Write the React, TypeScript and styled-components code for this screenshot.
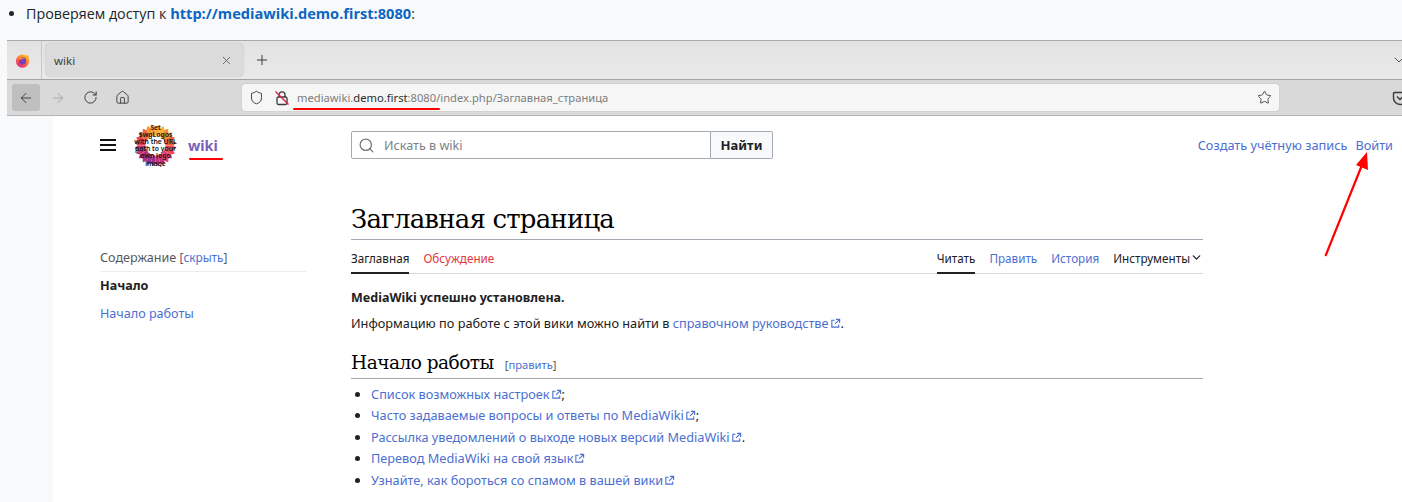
import styled, { createGlobalStyle } from 'styled-components';
import { ArrowLeft, ArrowRight, ChevronDown, House, Plus, RotateCw, Search, Shield, Star, X } from 'lucide-react';

const GlobalStyle = createGlobalStyle`
  html, body {
    margin: 0;
    padding: 0;
    background: #f8f9fa;
    overflow: hidden;
  }
  a {
    color: #4b6fd0;
    text-decoration: none;
  }
`;

const Page = styled.div`
  position: relative;
  width: 1402px;
  height: 502px;
  overflow: hidden;
  font-family: "Noto Sans", "Open Sans", sans-serif;
  color: #202122;
`;

const Intro = styled.ul`
  margin: 0;
  height: 40px;
  padding: 3px 0 0 26px;
  box-sizing: border-box;
  font-family: "Open Sans", "Noto Sans", sans-serif;
  font-size: 14.3px;
  line-height: 20px;
  color: #212529;
  a {
    color: #0b66c3;
    font-weight: 700;
    font-size: 14.6px;
  }
`;

const Browser = styled.div`
  margin-left: 7px;
  font-family: "Noto Sans", sans-serif;
`;

const TabStrip = styled.div`
  height: 38px;
  border-top: 1px solid #a9a9a9;
  border-bottom: 1px solid #a3a3a3;
  background: linear-gradient(#e2e2e2, #e9e9e9);
  display: flex;
  align-items: center;
`;

const PinnedTab = styled.div`
  width: 35px;
  height: 100%;
  border-right: 1px solid #c8c8c8;
  display: flex;
  align-items: center;
  justify-content: center;
  padding-right: 4px;
  box-sizing: border-box;
`;

const ActiveTab = styled.div`
  margin-left: 4px;
  width: 197px;
  height: 32px;
  border-radius: 4px;
  background: #dbdbdb;
  box-shadow: 0 0 2px #b0b0b0;
  display: flex;
  align-items: center;
  justify-content: space-between;
  padding: 0 10px 0 8px;
  box-sizing: border-box;
  font-size: 11.5px;
  color: #3c3c3c;
`;

const NewTab = styled.div`
  margin-left: 11px;
  display: flex;
  color: #3a3a3a;
`;

const TabMenu = styled.div`
  margin-left: auto;
  margin-right: -5px;
  display: flex;
  color: #4a4a4a;
`;

const NavBar = styled.div`
  height: 35px;
  background: #d9d9d9;
  border-bottom: 1px solid #b4b4b4;
  display: flex;
  align-items: center;
  padding-left: 5px;
`;

const NavButton = styled.div<{ $active?: boolean; $muted?: boolean }>`
  width: 28px;
  height: 27px;
  margin-right: 4px;
  border-radius: 3px;
  display: flex;
  align-items: center;
  justify-content: center;
  background: ${(p) => (p.$active ? '#bfbfbf' : 'transparent')};
  color: ${(p) => (p.$muted ? '#a4a4a4' : '#3a3a3a')};
`;

const UrlBar = styled.div`
  position: relative;
  margin-left: 102px;
  width: 1037px;
  height: 27px;
  background: #f6f6f6;
  border-radius: 3px;
  box-shadow: 0 0 1px #9a9a9a;
  display: flex;
  align-items: center;
  padding: 0 7px;
  box-sizing: border-box;
  color: #3a3a3a;
`;

const ShieldSlot = styled.div`
  display: flex;
  margin-right: 10px;
`;

const UrlText = styled.div`
  margin-left: 7px;
  font-size: 11.2px;
  color: #7d7d7d;
  flex: 1;
  b {
    font-weight: 400;
    color: #2b2b2b;
  }
`;

const UrlMark = styled.div`
  position: absolute;
  left: 51px;
  top: 24px;
  width: 147px;
  height: 2px;
  background: #f00;
  border-radius: 1px;
`;

const PocketSlot = styled.div`
  margin-left: auto;
  margin-right: -6px;
  display: flex;
  color: #3a3a3a;
`;

const Content = styled.div`
  margin-left: 53px;
  height: 386px;
  background: #fff;
  padding: 4px 9px 0 47px;
  box-sizing: border-box;
`;

const Header = styled.header`
  height: 50px;
  display: flex;
  align-items: center;
  font-size: 13px;
`;

const Burger = styled.div`
  width: 16px;
  height: 12px;
  border-top: 2px solid #111;
  border-bottom: 2px solid #111;
  box-sizing: border-box;
  position: relative;
  &::after {
    content: '';
    position: absolute;
    left: 0;
    right: 0;
    top: 3px;
    height: 2px;
    background: #111;
  }
`;

const Brand = styled.div`
  position: relative;
  width: 217px;
  margin-left: 18px;
  display: flex;
  align-items: center;
  gap: 11px;
`;

const WikiName = styled.span`
  font-weight: 700;
  font-size: 14.4px;
  color: #7b5fb8;
  padding-top: 1px;
`;

const BrandMark = styled.div`
  position: absolute;
  left: 55px;
  top: 34px;
  width: 34px;
  height: 2px;
  background: #f00;
  border-radius: 1px;
`;

const SearchForm = styled.div`
  width: 422px;
  height: 28px;
  display: flex;
`;

const SearchInput = styled.div`
  flex: 1;
  border: 1px solid #a2a9b1;
  border-radius: 2px 0 0 2px;
  display: flex;
  align-items: center;
  gap: 9px;
  padding-left: 6px;
  color: #7d8185;
  font-size: 12.6px;
`;

const SearchButton = styled.div`
  width: 62px;
  box-sizing: border-box;
  border: 1px solid #a2a9b1;
  border-left: 0;
  border-radius: 0 2px 2px 0;
  background: #f8f9fa;
  display: flex;
  align-items: center;
  justify-content: center;
  font-weight: 700;
  font-size: 13px;
  color: #202122;
`;

const UserLinks = styled.nav`
  margin-left: auto;
  display: flex;
  gap: 8px;
  font-size: 12.75px;
`;

const Columns = styled.div`
  display: grid;
  grid-template-columns: 206px 852px;
  column-gap: 45px;
  padding-top: 31px;
`;

const Sidebar = styled.aside`
  padding-top: 46px;
  font-size: 12.6px;
`;

const TocHead = styled.div`
  height: 24px;
  border-bottom: 1px solid #eaecf0;
  color: #54595d;
  line-height: 20px;
  margin-bottom: 3px;
  span {
    font-size: 11.8px;
  }
`;

const TocItem = styled.div<{ $current?: boolean }>`
  height: 28px;
  line-height: 22px;
  font-weight: ${(p) => (p.$current ? 700 : 400)};
`;

const Title = styled.h1`
  margin: 0;
  height: 38px;
  border-bottom: 1px solid #a2a9b1;
  font-family: "DejaVu Serif", "Liberation Serif", serif;
  font-weight: 400;
  font-size: 26px;
  letter-spacing: -0.8px;
  line-height: 36px;
  color: #000;
`;

const TabRow = styled.div`
  height: 34px;
  border-bottom: 1px solid #d8dadd;
  box-sizing: border-box;
  display: flex;
  justify-content: space-between;
  font-size: 11.7px;
`;

const TabGroup = styled.div`
  display: flex;
  gap: 14px;
`;

const PageTab = styled.div<{ $selected?: boolean; $tone?: string }>`
  height: 34px;
  padding-top: 3px;
  box-sizing: border-box;
  border-bottom: 2px solid ${(p) => (p.$selected ? '#202122' : 'transparent')};
  display: flex;
  align-items: center;
  color: ${(p) => p.$tone ?? '#202122'};
`;

const Article = styled.article`
  font-size: 12.72px;
  line-height: 20px;
  padding-top: 14px;
`;

const Paragraph = styled.p<{ $strong?: boolean }>`
  margin: 0 0 5px;
  font-weight: ${(p) => (p.$strong ? 700 : 400)};
  font-size: ${(p) => (p.$strong ? '12.5px' : 'inherit')};
`;

const SectionHead = styled.h2`
  margin: 16px 0 0;
  height: 30px;
  border-bottom: 1px solid #a2a9b1;
  box-sizing: border-box;
  font-family: "DejaVu Serif", "Liberation Serif", serif;
  font-weight: 400;
  font-size: 18.5px;
  letter-spacing: -0.5px;
  line-height: 28px;
  color: #000;
  span {
    margin-left: 11px;
    font-family: "Noto Sans", sans-serif;
    font-size: 11.2px;
    letter-spacing: 0;
    color: #54595d;
  }
`;

const LinkList = styled.ul`
  margin: 5px 0 0 20px;
  padding: 0;
  li {
    height: 21.4px;
    line-height: 21px;
  }
`;

const OutIcon = styled.svg`
  width: 11px;
  height: 11px;
  margin-left: 1px;
  vertical-align: -1px;
  color: #4b6fd0;
`;

const ArrowLayer = styled.svg`
  position: absolute;
  left: 1310px;
  top: 145px;
  pointer-events: none;
`;

const logoColors = ['#fbb034', '#f78a2e', '#f2603a', '#ee4a4e', '#e83f6f', '#c2307f', '#9c2f8c', '#a92f80', '#c9336a', '#e2455a', '#ee6a3a', '#f6952c'];

const LogoWedges = () => {
  const count = 24;
  return (
    <>
      {Array.from({ length: count }, (_, i) => {
        const step = (Math.PI * 2) / count;
        const a = i * step - Math.PI / 2;
        const pt = (r: number, t: number) => `${21.5 + r * Math.cos(t)},${21.5 + r * Math.sin(t)}`;
        return (
          <polygon
            key={i}
            points={`21.5,21.5 ${pt(18, a)} ${pt(21, a + step / 2)} ${pt(18, a + step)}`}
            fill={logoColors[Math.floor((i / count) * logoColors.length)]}
          />
        );
      })}
    </>
  );
};

const logoLines = ['Set', '$wgLogos', 'with the URL', 'path to your', 'own logo', 'image'];

const Logo = () => (
  <svg width="43" height="43" viewBox="0 0 43 43">
    <LogoWedges />
    <circle cx="21.5" cy="21.5" r="10" fill="#fff" />
    {logoLines.map((line, i) => (
      <text
        key={line}
        x="21.5"
        y={6 + i * 7.1}
        textAnchor="middle"
        fontFamily="Noto Sans, sans-serif"
        fontWeight="600"
        fontSize="6.8"
        fill="#111"
      >
        {line}
      </text>
    ))}
  </svg>
);

const FirefoxLogo = () => (
  <svg width="15" height="15" viewBox="0 0 16 16">
    <defs>
      <linearGradient id="fx" x1="0.8" y1="0" x2="0.2" y2="1">
        <stop offset="0" stopColor="#ffc21c" />
        <stop offset="0.5" stopColor="#ff7139" />
        <stop offset="1" stopColor="#e31587" />
      </linearGradient>
    </defs>
    <circle cx="8" cy="8.6" r="7" fill="url(#fx)" />
    <path d="M12.5 1.5c1.6 1.4 2.4 3 2.5 4.6L12 4z" fill="#ffb21c" />
    <circle cx="8" cy="8.4" r="3.9" fill="#7b3fb5" />
    <path d="M4.2 6.2c1.6-1.6 4.6-1.8 6.2-.2-1.6-.4-2.8 0-3.4.8L4.6 7.4z" fill="#ff8a2c" />
  </svg>
);

const LockOff = () => (
  <svg width="16" height="16" viewBox="0 0 16 16" fill="none" stroke="#3a3a3a" strokeWidth="1.3">
    <rect x="3" y="7" width="10" height="7.5" rx="1.5" />
    <path d="M5 7V4.8a3 3 0 0 1 6 0V7" />
    <path d="M1.5 1.5l13 13" stroke="#e2224a" strokeWidth="1.4" />
  </svg>
);

const PocketIcon = () => (
  <svg width="16" height="16" viewBox="0 0 16 16" fill="none" stroke="#3a3a3a" strokeWidth="1.4">
    <path d="M2.5 2.5h11a1 1 0 0 1 1 1V8a6.5 6.5 0 0 1-13 0V3.5a1 1 0 0 1 1-1z" />
    <path d="M5 6.5l3 3 3-3" />
  </svg>
);

const OutLink = () => (
  <OutIcon viewBox="0 0 12 12" fill="none" stroke="currentColor" strokeWidth="1.2">
    <path d="M5 2.5H2v7.5h7.5V7" />
    <path d="M6.5 1.5h4v4M10.5 1.5L5.5 6.5" />
  </OutIcon>
);

const App = () => (
  <Page>
    <GlobalStyle />
    <Intro>
      <li>
        Проверяем доступ к <a href="#u">http://mediawiki.demo.first:8080</a>:
      </li>
    </Intro>

    <Browser>
      <TabStrip>
        <PinnedTab>
          <FirefoxLogo />
        </PinnedTab>
        <ActiveTab>
          wiki
          <X size={13} strokeWidth={1.5} color="#555" />
        </ActiveTab>
        <NewTab>
          <Plus size={16} strokeWidth={1.5} />
        </NewTab>
        <TabMenu>
          <ChevronDown size={16} strokeWidth={1.4} />
        </TabMenu>
      </TabStrip>
      <NavBar>
        <NavButton $active>
          <ArrowLeft size={16} strokeWidth={1.4} />
        </NavButton>
        <NavButton $muted>
          <ArrowRight size={16} strokeWidth={1.4} />
        </NavButton>
        <NavButton>
          <RotateCw size={15} strokeWidth={1.6} />
        </NavButton>
        <NavButton>
          <House size={15} strokeWidth={1.5} />
        </NavButton>
        <UrlBar>
          <ShieldSlot>
            <Shield size={15} strokeWidth={1.5} />
          </ShieldSlot>
          <LockOff />
          <UrlText>
            mediawiki.<b>demo.first</b>:8080/index.php/Заглавная_страница
          </UrlText>
          <Star size={15} strokeWidth={1.4} />
          <UrlMark />
        </UrlBar>
        <PocketSlot>
          <PocketIcon />
        </PocketSlot>
      </NavBar>
    </Browser>

    <Content>
      <Header>
        <Burger />
        <Brand>
          <Logo />
          <WikiName>wiki</WikiName>
          <BrandMark />
        </Brand>
        <SearchForm>
          <SearchInput>
            <Search size={17} strokeWidth={1.8} color="#72777d" />
            Искать в wiki
          </SearchInput>
          <SearchButton>Найти</SearchButton>
        </SearchForm>
        <UserLinks>
          <a href="#c">Создать учётную запись</a>
          <a href="#l">Войти</a>
        </UserLinks>
      </Header>

      <Columns>
        <Sidebar>
          <TocHead>
            Содержание{' '}
            <span>
              [<a href="#h">скрыть</a>]
            </span>
          </TocHead>
          <TocItem $current>Начало</TocItem>
          <TocItem>
            <a href="#s">Начало работы</a>
          </TocItem>
        </Sidebar>
        <main>
          <Title>Заглавная страница</Title>
          <TabRow>
            <TabGroup>
              <PageTab $selected>Заглавная</PageTab>
              <PageTab $tone="#e5353c">Обсуждение</PageTab>
            </TabGroup>
            <TabGroup>
              <PageTab $selected>Читать</PageTab>
              <PageTab $tone="#4b6fd0">Править</PageTab>
              <PageTab $tone="#4b6fd0">История</PageTab>
              <PageTab>
                Инструменты
                <ChevronDown size={13} strokeWidth={2.4} />
              </PageTab>
            </TabGroup>
          </TabRow>
          <Article>
            <Paragraph $strong>MediaWiki успешно установлена.</Paragraph>
            <Paragraph>
              Информацию по работе с этой вики можно найти в <a href="#g">справочном руководстве</a>
              <OutLink />.
            </Paragraph>
            <SectionHead>
              Начало работы
              <span>
                [<a href="#e">править</a>]
              </span>
            </SectionHead>
            <LinkList>
              <li>
                <a href="#1">Список возможных настроек</a>
                <OutLink />;
              </li>
              <li>
                <a href="#2">Часто задаваемые вопросы и ответы по MediaWiki</a>
                <OutLink />;
              </li>
              <li>
                <a href="#3">Рассылка уведомлений о выходе новых версий MediaWiki</a>
                <OutLink />.
              </li>
              <li>
                <a href="#4">Перевод MediaWiki на свой язык</a>
                <OutLink />
              </li>
              <li>
                <a href="#5">Узнайте, как бороться со спамом в вашей вики</a>
                <OutLink />
              </li>
            </LinkList>
          </Article>
        </main>
      </Columns>
    </Content>

    <ArrowLayer width="70" height="120" viewBox="1310 145 70 120">
      <path d="M1325.5 256L1362 165" stroke="#f00" strokeWidth="2.2" fill="none" />
      <polygon points="1367,152 1368,170 1356,165" fill="#f00" />
    </ArrowLayer>
  </Page>
);

export default App;
